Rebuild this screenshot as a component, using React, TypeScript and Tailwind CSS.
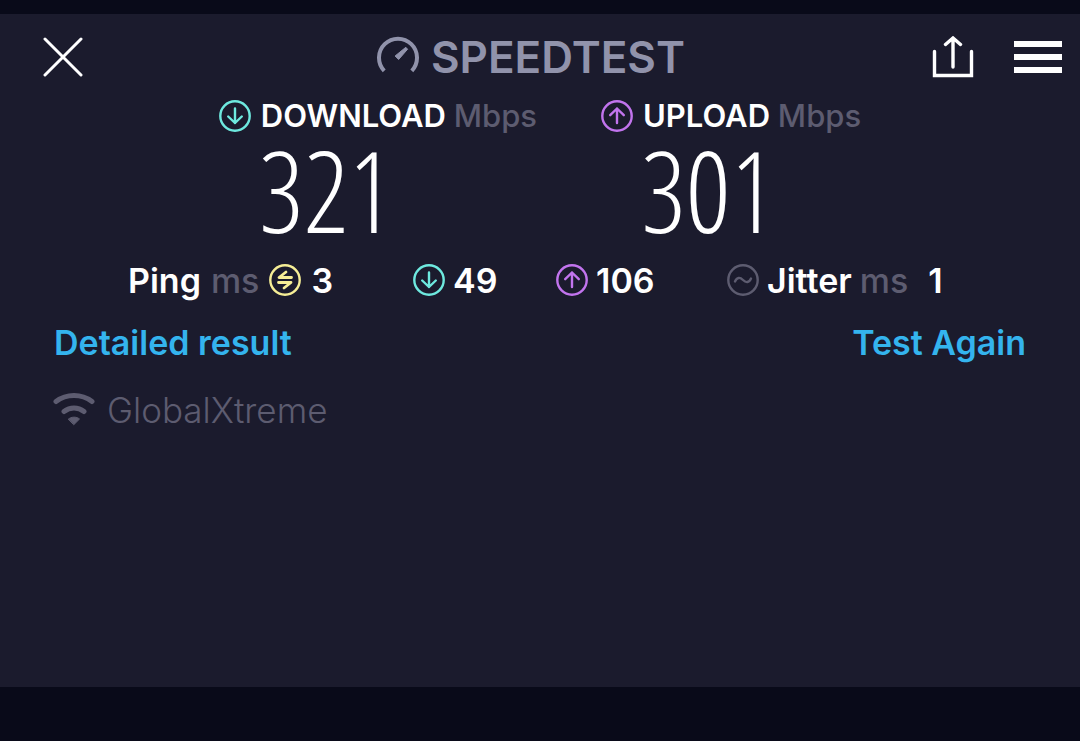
import type { ReactNode } from 'react'

function Ring({ className, children }: { className: string; children: ReactNode }) {
    return (
        <svg
            viewBox="0 0 32 32"
            className={`size-8 shrink-0 ${className}`}
            fill="none"
            stroke="currentColor"
            strokeWidth="2.4"
            strokeLinecap="round"
            strokeLinejoin="round"
            aria-hidden="true"
        >
            <circle cx="16" cy="16" r="14.7" />
            {children}
        </svg>
    )
}

function DownIcon() {
    return (
        <Ring className="text-[#6ee9df]">
            <path d="M16 8.500v14.500M9.200 16.500L16 23l6.800-6.500" />
        </Ring>
    )
}

function UpIcon() {
    return (
        <Ring className="text-[#c274ee]">
            <path d="M16 23V8.500M9.200 15.200L16 8.500l6.800 6.700" />
        </Ring>
    )
}

function PingIcon() {
    return (
        <Ring className="text-[#f6ee96]">
            <path d="M22.500 13.500H10L17 8M9.500 18.500H22L15 24" strokeWidth="2.800" />
        </Ring>
    )
}

function JitterIcon() {
    return (
        <Ring className="text-[#5d5c70]">
            <path d="M8 17.500c2-4.500 5-4.500 8-1.500s6 3 8-1.500" />
        </Ring>
    )
}

function Speed({ icon, label, value }: { icon: ReactNode; label: string; value: string }) {
    return (
        <div className="min-w-[318px] last:min-w-[260px]">
            <h2 className="flex h-9 items-center gap-2.5 text-[31px] leading-9 font-semibold">
                {icon}
                <span>
                    {label} <span className="font-medium text-[#5d5c70]">Mbps</span>
                </span>
            </h2>
            <p className="pb-2 pl-10 font-['Open_Sans_Condensed_Light','Open_Sans_Condensed','Roboto_Condensed',sans-serif] text-[112px] leading-[112px] font-light">
                {value}
            </p>
        </div>
    )
}

export default function App() {
    return (
        <div className="flex min-h-screen flex-col bg-[#090a19] pt-3.5 pb-[54px] font-['Inter',sans-serif] text-white">
            <main className="flex-1 bg-[#1b1b2d]">
                <header className="grid h-[84px] grid-cols-[1fr_auto_1fr] items-center pt-0.5 pr-[18px]">
                    <button type="button" aria-label="Close" className="ml-[43px] w-10">
                        <svg viewBox="0 0 40 40" className="size-10" stroke="currentColor" strokeWidth="3" strokeLinecap="round">
                            <path d="M2 2l36 36M38 2L2 38" />
                        </svg>
                    </button>

                    <h1 className="flex items-center gap-3 text-[44px] font-semibold text-[#9193ab]">
                        <svg viewBox="0 0 42 42" className="size-[42px]" fill="none" stroke="currentColor" aria-hidden="true">
                            <path d="M7.200 34.800A19 19 0 1 1 34.800 34.800" strokeWidth="4" />
                            <path d="M28.800 11.300l1.800 1.900-9 10.300-3.500-3.500z" fill="currentColor" strokeWidth="1" />
                        </svg>
                        SPEEDTEST
                    </h1>

                    <div className="flex items-center justify-end gap-10">
                        <button type="button" aria-label="Share">
                            <svg viewBox="0 0 42 42" className="size-[42px]" fill="none" stroke="currentColor" strokeWidth="3.4" strokeLinecap="round">
                                <path d="M2.500 15.500v24h37v-24M21 31V2M13.500 8.500L21 2l7.500 6.500" />
                            </svg>
                        </button>
                        <button type="button" aria-label="Menu">
                            <svg viewBox="0 0 48 32" className="h-8 w-12" fill="currentColor">
                                <path d="M0 0h48v6H0zM0 13h48v6H0zM0 26h48v6H0z" />
                            </svg>
                        </button>
                    </div>
                </header>

                <section className="flex justify-center gap-16">
                    <Speed icon={<DownIcon />} label="DOWNLOAD" value="321" />
                    <Speed icon={<UpIcon />} label="UPLOAD" value="301" />
                </section>

                <section className="grid h-[52px] grid-cols-[285fr_143fr_171fr_225fr] items-center px-32 text-[34px] font-semibold">
                    <div className="flex items-center gap-2.5">
                        Ping <span className="font-medium text-[#5d5c70]">ms</span>
                        <PingIcon />3
                    </div>
                    <div className="flex items-center gap-2">
                        <DownIcon />
                        49
                    </div>
                    <div className="flex items-center gap-2">
                        <UpIcon />
                        106
                    </div>
                    <div className="flex items-center gap-2">
                        <JitterIcon />
                        Jitter <span className="font-medium text-[#5d5c70]">ms</span>
                        <span className="pl-3">1</span>
                    </div>
                </section>

                <nav className="flex h-[72px] items-center justify-between px-[54px] text-[34px] font-semibold text-[#34b4ee]">
                    <a href="#details">Detailed result</a>
                    <a href="#test">Test Again</a>
                </nav>

                <div className="flex h-16 items-center gap-3 px-[53px] text-[35px] font-light text-[#5d5c70]">
                    <svg viewBox="0 0 42 34" className="h-[34px] w-[42px]" fill="none" stroke="currentColor" strokeWidth="5" strokeLinecap="round" aria-hidden="true">
                        <path d="M3 8.500c10.500-8 25.500-8 36 0M11 18.500c6-4.800 14-4.800 20 0" />
                        <path d="M15.500 26c3-2.500 8-2.500 11 0l-5.500 5.500z" fill="currentColor" strokeWidth="1" />
                    </svg>
                    GlobalXtreme
                </div>
            </main>
        </div>
    )
}
